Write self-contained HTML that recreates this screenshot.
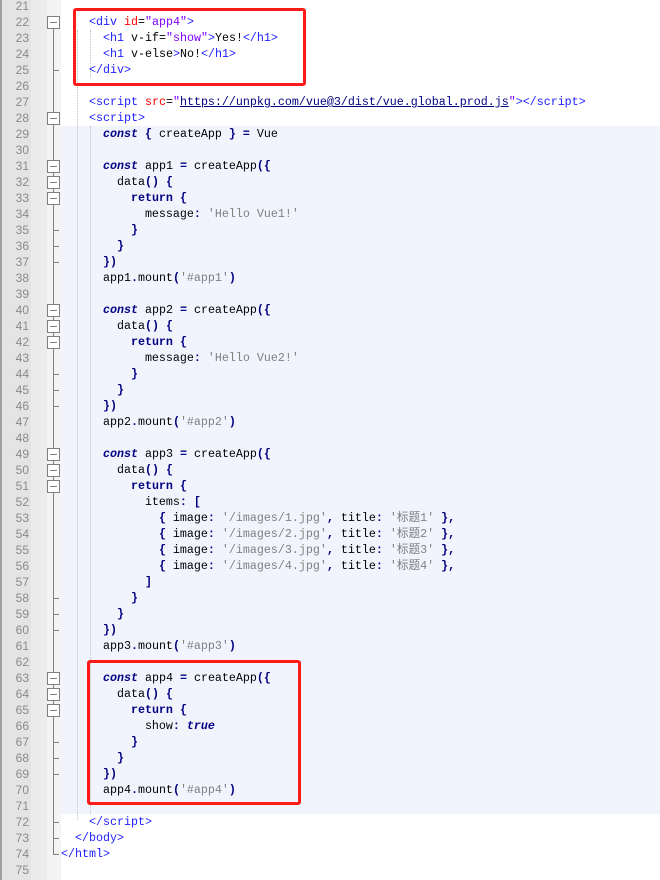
<!DOCTYPE html>
<html><head><meta charset="utf-8"><style>
body{margin:0;width:660px;height:880px;overflow:hidden;background:#fff;position:relative;font-family:"Liberation Mono","Noto Sans CJK SC",monospace;}
.gut{position:absolute;left:0;top:0;width:31px;height:880px;background:#e4e4e4;border-left:2px solid #a0a0a0;box-sizing:border-box}
.gut2{position:absolute;left:31px;top:0;width:16px;height:880px;background:#ececec}
.fold{position:absolute;left:47px;top:0;width:14px;height:880px;background:#f4f4f4}
.hl{position:absolute;left:61px;top:126px;width:599px;height:688px;background:#f2f4fd}
.n{position:absolute;left:2px;width:27px;text-align:right;font-size:12px;color:#8a8a8a;font-family:"Liberation Sans",sans-serif;line-height:16px}
.l{position:absolute;left:61px;font-size:11.67px;line-height:16px;white-space:pre;color:#000}
.t{color:#2020ff}.a{color:#ff0000}.s{color:#8000ff}.g{color:#808080}.p{color:#000080;font-weight:bold}.k{color:#000080;font-weight:bold}.ki{color:#000080;font-style:italic;font-weight:bold}
.u{text-decoration:underline;color:#000080}
.bx{position:absolute;left:47px;width:11px;height:11px;border:1px solid #808080;background:#fff}
.bx:after{content:"";position:absolute;left:2px;top:5px;width:7px;height:1px;background:#808080}
.vl{position:absolute;left:53px;width:1px;background:#808080}
.tk{position:absolute;left:53px;width:6px;height:1px;background:#808080}
.rb{position:absolute;border:3px solid #ff1a1a;border-radius:3px;box-sizing:border-box}
.dg{position:absolute;width:0;border-left:1px dotted #c0c0c0}
</style></head><body>
<div class="gut"></div><div class="gut2"></div><div class="fold"></div><div class="hl"></div>
<div class="vl" style="top:20px;height:834px"></div>
<div class="dg" style="left:90px;top:30px;height:48px"></div>
<div class="dg" style="left:77px;top:30px;height:790px"></div>
<div class="dg" style="left:90px;top:126px;height:688px"></div>
<div id="c"></div>
<script>
var L={21:'',22:'<t>&lt;div</t> <a>id</a>=<s>"app4"</s><t>&gt;</t>',23:'  <t>&lt;h1</t> v-if=<s>"show"</s><t>&gt;</t>Yes!<t>&lt;/h1&gt;</t>',24:'  <t>&lt;h1</t> v-else<t>&gt;</t>No!<t>&lt;/h1&gt;</t>',25:'<t>&lt;/div&gt;</t>',26:'',
27:'<t>&lt;script</t> <a>src</a>=<s>"</s><u>https://unpkg.com/vue@3/dist/vue.global.prod.js</u><s>"</s><t>&gt;&lt;/script&gt;</t>',28:'<t>&lt;script&gt;</t>',
29:'  <ki>const</ki> <p>{</p> createApp <p>}</p> <p>=</p> Vue',30:'',
31:'  <ki>const</ki> app1 <p>=</p> createApp<p>({</p>',32:'    data<p>()</p> <p>{</p>',33:'      <k>return</k> <p>{</p>',34:'        message<p>:</p> <g>\'Hello Vue1!\'</g>',35:'      <p>}</p>',36:'    <p>}</p>',37:'  <p>})</p>',38:'  app1<p>.</p>mount<p>(</p><g>\'#app1\'</g><p>)</p>',39:'',
40:'  <ki>const</ki> app2 <p>=</p> createApp<p>({</p>',41:'    data<p>()</p> <p>{</p>',42:'      <k>return</k> <p>{</p>',43:'        message<p>:</p> <g>\'Hello Vue2!\'</g>',44:'      <p>}</p>',45:'    <p>}</p>',46:'  <p>})</p>',47:'  app2<p>.</p>mount<p>(</p><g>\'#app2\'</g><p>)</p>',48:'',
49:'  <ki>const</ki> app3 <p>=</p> createApp<p>({</p>',50:'    data<p>()</p> <p>{</p>',51:'      <k>return</k> <p>{</p>',52:'        items<p>:</p> <p>[</p>',
53:'          <p>{</p> image<p>:</p> <g>\'/images/1.jpg\'</g><p>,</p> title<p>:</p> <g>\'标题1\'</g> <p>},</p>',54:'          <p>{</p> image<p>:</p> <g>\'/images/2.jpg\'</g><p>,</p> title<p>:</p> <g>\'标题2\'</g> <p>},</p>',55:'          <p>{</p> image<p>:</p> <g>\'/images/3.jpg\'</g><p>,</p> title<p>:</p> <g>\'标题3\'</g> <p>},</p>',56:'          <p>{</p> image<p>:</p> <g>\'/images/4.jpg\'</g><p>,</p> title<p>:</p> <g>\'标题4\'</g> <p>},</p>',
57:'        <p>]</p>',58:'      <p>}</p>',59:'    <p>}</p>',60:'  <p>})</p>',61:'  app3<p>.</p>mount<p>(</p><g>\'#app3\'</g><p>)</p>',62:'',
63:'  <ki>const</ki> app4 <p>=</p> createApp<p>({</p>',64:'    data<p>()</p> <p>{</p>',65:'      <k>return</k> <p>{</p>',66:'        show<p>:</p> <ki>true</ki>',67:'      <p>}</p>',68:'    <p>}</p>',69:'  <p>})</p>',70:'  app4<p>.</p>mount<p>(</p><g>\'#app4\'</g><p>)</p>',71:'',
72:'<t>&lt;/script&gt;</t>'};
var h='';
for(var n=21;n<=75;n++){var y=-2+(n-21)*16;
h+='<div class="n" style="top:'+y+'px">'+n+'</div>';
var s;
if(n==73)s='  <t>&lt;/body&gt;</t>';else if(n==74)s='<t>&lt;/html&gt;</t>';else if(n==75)s='';else s=(L[n]?'    '+L[n]:'');
s=s.replace(/<(\/?)([tasgpku]|ki)>/g,function(m,c,t){return c?'</span>':'<span class="'+t+'">';});
h+='<div class="l" style="top:'+y+'px">'+s+'</div>';}
[22,28,31,32,33,40,41,42,49,50,51,63,64,65].forEach(function(n){h+='<div class="bx" style="top:'+(-2+(n-21)*16+2)+'px"></div>';});
[25,35,36,37,44,45,46,58,59,60,67,68,69,72,73,74].forEach(function(n){h+='<div class="tk" style="top:'+(-2+(n-21)*16+8)+'px"></div>';});
document.getElementById('c').innerHTML=h;
</script>
<div class="rb" style="left:73px;top:8px;width:233px;height:78px"></div>
<div class="rb" style="left:87px;top:660px;width:214px;height:145px"></div>
</body></html>
